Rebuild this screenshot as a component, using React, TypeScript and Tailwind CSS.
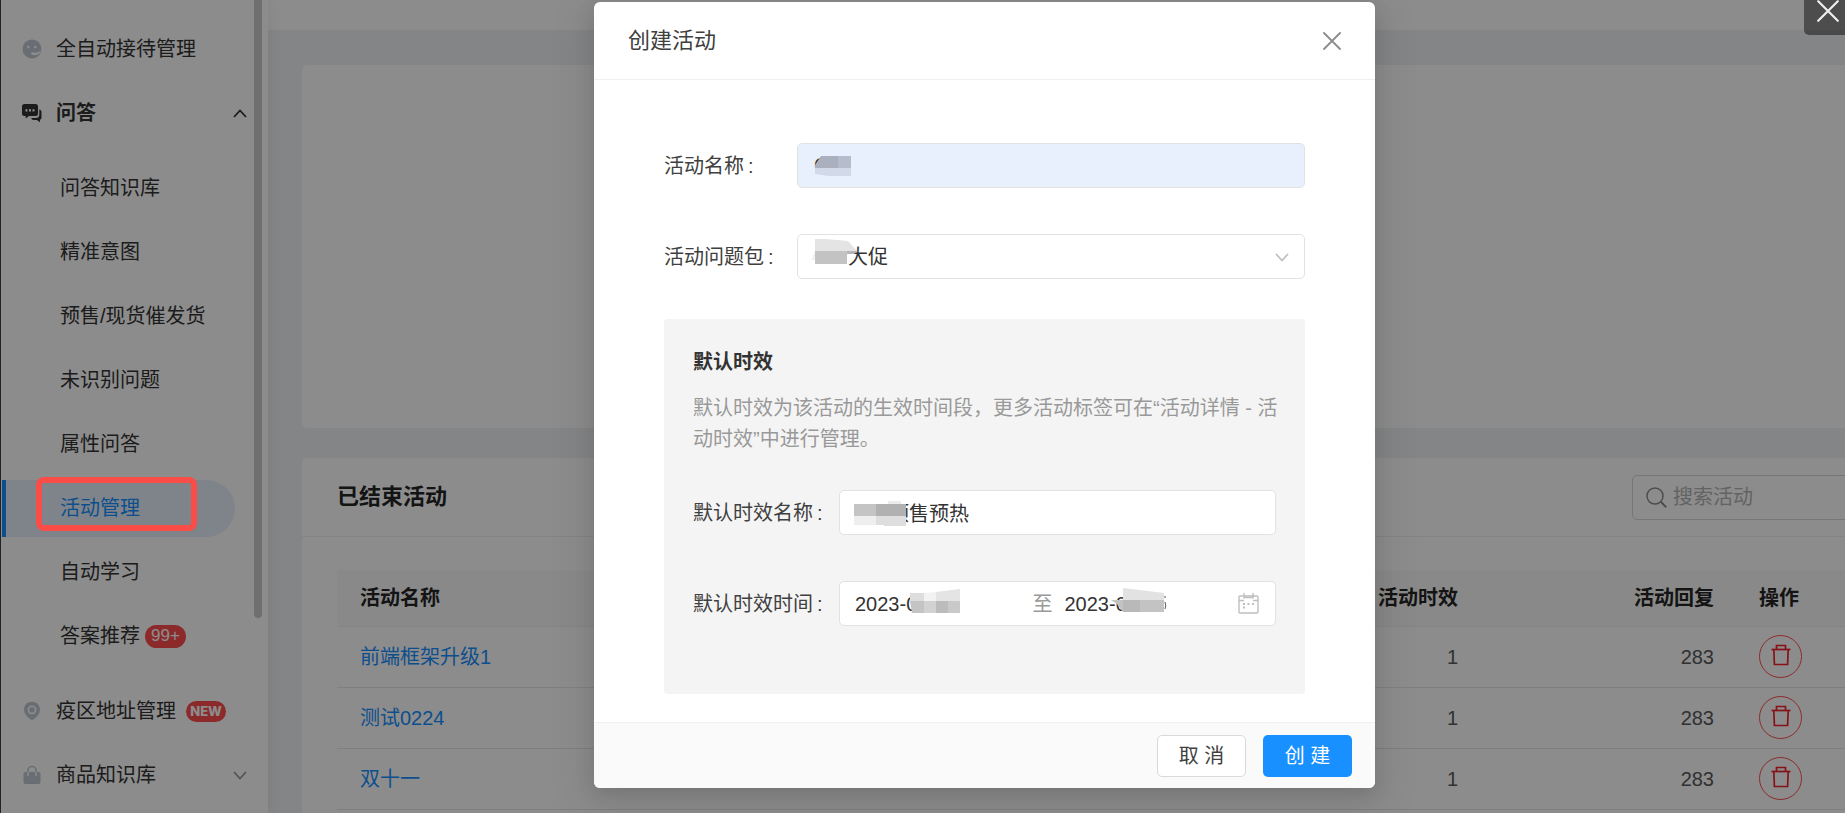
import React, { useState } from "react";

type NavItem = { label: string; active?: boolean; badge?: string };

const QA_ITEMS: NavItem[] = [
  { label: "问答知识库" },
  { label: "精准意图" },
  { label: "预售/现货催发货" },
  { label: "未识别问题" },
  { label: "属性问答" },
  { label: "活动管理", active: true },
  { label: "自动学习" },
  { label: "答案推荐", badge: "99+" },
];

const ACTIVITIES = [
  { name: "前端框架升级1", periods: 1, replies: 283 },
  { name: "测试0224", periods: 1, replies: 283 },
  { name: "双十一", periods: 1, replies: 283 },
];

/* ---------- icons ---------- */

function FaceIcon() {
  return (
    <svg width="20" height="20" viewBox="0 0 20 20" fill="none">
      <circle cx="10" cy="10" r="9.5" fill="#c0c9d5" />
      <circle cx="6.2" cy="8" r="1.3" fill="#fff" />
      <circle cx="13.2" cy="8" r="1.3" fill="#fff" />
      <path d="M9 14.500c0-1 .8-1.500 1.800-1.300 2.800.6 5.400.2 8.400-1.500-.8 2.600-3 4.200-5.600 4.400-2.200.2-4.600 0-4.600-1.600z" fill="#fff" />
    </svg>
  );
}

function ChatIcon() {
  return (
    <svg width="20" height="20" viewBox="0 0 20 20" fill="#333">
      <path d="M2.5 1h11A2.5 2.5 0 0 1 16 3.500v7a2.500 2.500 0 0 1-2.500 2.500H7l-3.300 2.500V13H2.500A2.500 2.500 0 0 1 0 10.500v-7A2.500 2.500 0 0 1 2.500 1z" />
      <path d="M17.300 6.500A2.500 2.500 0 0 1 19.500 9v5.500a2.500 2.500 0 0 1-1.500 2.300v2.400L14.800 17h-3.300a2.500 2.500 0 0 1-2.300-2h4.600a3.500 3.500 0 0 0 3.500-3.500z" />
      <rect x="3.500" y="6.200" width="2" height="2.300" fill="#fff" />
      <rect x="7" y="6.200" width="2" height="2.300" fill="#fff" />
      <rect x="10.500" y="6.200" width="2" height="2.300" fill="#fff" />
    </svg>
  );
}

function PinIcon() {
  return (
    <svg width="20" height="20" viewBox="0 0 20 20">
      <path d="M10 .8c4.600 0 8 3.400 8 7.800 0 3.800-2.400 7-6.200 9.700-1.200.9-2.400.9-3.600 0C4.400 15.600 2 12.400 2 8.600 2 4.200 5.400.8 10 .8z" fill="#c0c9d5" />
      <circle cx="10" cy="8.800" r="3.600" fill="none" stroke="#fff" strokeWidth="1.600" />
    </svg>
  );
}

function BagIcon() {
  return (
    <svg width="20" height="20" viewBox="0 0 20 20" fill="none">
      <rect x="1.500" y="7" width="17" height="12" rx="2" fill="#c0c9d5" />
      <path d="M6 7v4M14 7v4" stroke="#fff" strokeWidth="1.400" />
      <path d="M6 7V5.500a4 4 0 0 1 8 0V7" stroke="#c0c9d5" strokeWidth="1.600" />
    </svg>
  );
}

function Chevron({ up, className }: { up?: boolean; className?: string }) {
  return (
    <svg className={className} width="14" height="9" viewBox="0 0 14 9" fill="none" stroke="currentColor" strokeWidth="1.8">
      <path d={up ? "M1 8l6-6.500L13 8" : "M1 1l6 6.500L13 1"} />
    </svg>
  );
}

function CloseIcon({ size }: { size: number }) {
  return (
    <svg width={size} height={size} viewBox="0 0 18 18" stroke="currentColor" strokeWidth="1.800" strokeLinecap="round">
      <path d="M1 1l16 16M17 1L1 17" />
    </svg>
  );
}

function SearchIcon() {
  return (
    <svg width="21" height="21" viewBox="0 0 21 21" fill="none" stroke="#8c8c8c" strokeWidth="1.500">
      <circle cx="9" cy="9" r="8" />
      <path d="M14.800 14.800l5.400 5.400" strokeWidth="2" />
    </svg>
  );
}

function TrashIcon() {
  return (
    <svg width="20" height="22" viewBox="0 0 20 22" fill="none" stroke="currentColor" strokeWidth="1.700">
      <path d="M.5 5.500h19" />
      <path d="M5.500 5.500V1.500h9v4" />
      <path d="M2.800 5.500l.6 15h13.200l.6-15" />
    </svg>
  );
}

function CalendarIcon() {
  return (
    <svg className="ml-2 shrink-0" width="21" height="21" viewBox="0 0 21 21" fill="none" stroke="#bfbfbf" strokeWidth="1.400">
      <rect x="1" y="3" width="19" height="17" rx="1" />
      <path d="M1 7.500h5M15 7.500h5M6 4.500h9M6 0v5.500M15 0v5.500" />
      <path d="M5 14.500h2M5 11h2M9.500 11h2M14 11h2" strokeWidth="2" />
    </svg>
  );
}

/* ---------- censored values ---------- */

function NameMask() {
  return (
    <svg className="pointer-events-none absolute left-4 top-2" width="48" height="28" viewBox="0 0 48 28">
      <path d="M8 5h17v12H2v-3z" fill="#aab0bd" />
      <rect x="25" y="5" width="13" height="12" fill="#b5bccb" />
      <path d="M2 17h36v8H16l-14-2z" fill="#d2d9e8" />
    </svg>
  );
}

function PackageMask() {
  return (
    <svg className="pointer-events-none absolute left-3 top-1" width="52" height="28" viewBox="0 0 52 28">
      <path d="M6 1h11l22 2 9 10H6z" fill="#e4e4e4" />
      <path d="M6 13h32v13H6z" fill="#c3c3c3" />
      <path d="M38 13h11l-4 3h-7z" fill="#b5b5b5" />
      <path d="M6 13v9H2z" fill="#f2f2f2" />
    </svg>
  );
}

function PeriodMask() {
  return (
    <svg className="pointer-events-none absolute left-3 top-2" width="56" height="32" viewBox="0 0 56 32">
      <path d="M3 6h22v12H3z" fill="#c4c4c4" />
      <path d="M37 3h13v3H37z" fill="#ececec" />
      <path d="M25 6h30v12H25z" fill="#b1b1b1" />
      <path d="M3 18h22v9H3z" fill="#eeeeee" />
      <path d="M25 18h30v10H33v-1h-8z" fill="#dedede" />
    </svg>
  );
}

function StartMask() {
  return (
    <svg className="pointer-events-none absolute left-[54px] -top-1" width="54" height="26" viewBox="0 0 54 26">
      <path d="M1 5h14v8H1z" fill="#dddddd" />
      <path d="M15 5l12-1v9H15z" fill="#f2f2f2" />
      <path d="M27 4l24-3v12H27z" fill="#e4e4e4" />
      <path d="M1 13h14v12H3z" fill="#c4c4c4" />
      <path d="M15 13h12v12H15z" fill="#d2d2d2" />
      <path d="M27 13h12v12H27z" fill="#bcbcbc" />
      <path d="M39 13h12v12H39z" fill="#c9c9c9" />
    </svg>
  );
}

function EndMask() {
  return (
    <svg className="pointer-events-none absolute left-[46px] -top-1" width="58" height="26" viewBox="0 0 58 26">
      <path d="M12 0l41 5v7H12z" fill="#e2e2e2" />
      <path d="M0 12h53v12H12l-6-8z" fill="#c3c3c3" />
      <path d="M12 12h17v12H12z" fill="#b9b9b9" />
      <path d="M54 8v2M54 14q1.500 4 0 7" stroke="#555" strokeWidth="1" fill="none" />
    </svg>
  );
}

/* ---------- page ---------- */

function NavRow({ icon, label, children }: { icon: React.ReactNode; label: string; children?: React.ReactNode }) {
  return (
    <a href="#" className="flex h-16 items-center pl-[21px] pr-[21px]">
      {icon}
      <span className="ml-[14px]">{label}</span>
      {children}
    </a>
  );
}

function Sidebar() {
  return (
    <nav className="relative z-10 w-[268px] shrink-0 border-l border-[#404040] bg-white pt-[17px] text-[#333] shadow-[2px_0_12px_rgba(0,0,0,0.06)]">
      <NavRow icon={<FaceIcon />} label="全自动接待管理" />
      <button className="flex h-16 w-full items-center pl-[21px] pr-[21px] font-bold">
        <ChatIcon />
        <span className="ml-[14px]">问答</span>
        <Chevron up className="ml-auto" />
      </button>
      <ul className="my-[11px]">
        {QA_ITEMS.map((item) => (
          <li key={item.label} className="flex h-16 items-center pl-px">
            <a
              href="#"
              className={
                item.active
                  ? "flex h-[57px] w-[233px] items-center rounded-r-full border-l-4 border-[#1890ff] bg-[#e6f0fb] pl-[54px] text-[#1890ff]"
                  : "flex h-[57px] w-[233px] items-center pl-[58px]"
              }
            >
              {item.label}
              {item.badge && (
                <span className="ml-[5px] flex h-[23px] items-center rounded-full bg-[#ff4d4f] px-[6px] text-[17px] text-white">
                  {item.badge}
                </span>
              )}
            </a>
          </li>
        ))}
      </ul>
      <NavRow icon={<PinIcon />} label="疫区地址管理">
        <span className="ml-[10px] flex h-[21px] w-10 items-center justify-center rounded-full bg-[#ff4d4f] font-[Inter,sans-serif] text-[13px] font-extrabold text-white">
          NEW
        </span>
      </NavRow>
      <NavRow icon={<BagIcon />} label="商品知识库">
        <Chevron className="ml-auto text-[#999]" />
      </NavRow>
      <div className="absolute right-[6px] top-0 h-[618px] w-2 rounded-b-full bg-[#cacaca]" />
    </nav>
  );
}

function ActivityTable() {
  return (
    <table className="w-full border-collapse">
      <thead>
        <tr className="h-14 border-b border-[#f0f0f0] bg-[#fafafa] text-[#262626]">
          <th className="pl-[23px] text-left">活动名称</th>
          <th className="w-[560px] pr-[22px] text-right">活动时效</th>
          <th className="w-[256px] pr-[22px] text-right">活动回复</th>
          <th className="w-[164px] pl-[23px] text-left">操作</th>
        </tr>
      </thead>
      <tbody>
        {ACTIVITIES.map((row) => (
          <tr key={row.name} className="h-[61px] border-b border-[#e8e8e8] text-[#595959]">
            <td className="pl-[23px]">
              <a href="#" className="text-[#1890ff]">{row.name}</a>
            </td>
            <td className="pr-[22px] text-right">{row.periods}</td>
            <td className="pr-[22px] text-right">{row.replies}</td>
            <td className="pl-[23px]">
              <button aria-label="删除" className="flex size-[43px] items-center justify-center rounded-full border border-[#ff4d4f] pb-1 text-[#f5222d]">
                <TrashIcon />
              </button>
            </td>
          </tr>
        ))}
      </tbody>
    </table>
  );
}

function CreateDialog() {
  const [name, setName] = useState("C");
  const [period, setPeriod] = useState("预售预热");
  const field = "h-[45px] w-full rounded-[5px] border border-[#e2e2e2] text-[#333] outline-none";

  return (
    <div role="dialog" aria-label="创建活动" className="mt-[2px] w-[781px] overflow-hidden rounded-md bg-white text-[#404040] shadow-[0_6px_20px_rgba(0,0,0,0.12),0_12px_40px_12px_rgba(0,0,0,0.06)]">
      <div className="flex h-[78px] items-center justify-between border-b border-[#f0f0f0] pl-[34px] pr-[34px]">
        <h2 className="text-[22px]">创建活动</h2>
        <button aria-label="关闭" className="text-[#8c8c8c]">
          <CloseIcon size={18} />
        </button>
      </div>

      <form className="px-[70px] pb-7 pt-[63px]">
        <div className="mb-[46px] flex items-center">
          <label htmlFor="name" className="w-[133px] shrink-0">
            活动名称<span className="ml-1">:</span>
          </label>
          <div className="relative flex-1">
            <input id="name" value={name} onChange={(e) => setName(e.target.value)} className={`${field} bg-[#e8f0fe] px-4`} />
            <NameMask />
          </div>
        </div>
        <div className="mb-10 flex items-center">
          <label htmlFor="package" className="w-[133px] shrink-0">
            活动问题包<span className="ml-1">:</span>
          </label>
          <div className="relative flex-1">
            <select id="package" className={`${field} appearance-none bg-white pl-[50px]`}>
              <option>大促</option>
            </select>
            <PackageMask />
            <Chevron className="pointer-events-none absolute right-4 top-[19px] text-[#bfbfbf]" />
          </div>
        </div>

        <section className="rounded-sm bg-[#f4f4f4] px-[29px] pb-[68px] pt-7">
          <h3 className="font-bold leading-[31px] text-[#333]">默认时效</h3>
          <p className="-mr-2 mb-[35px] mt-[15px] leading-[31px] text-[#999]">
            默认时效为该活动的生效时间段，更多活动标签可在“活动详情 - 活动时效”中进行管理。
          </p>
          <div className="mb-[46px] flex items-center">
            <label htmlFor="period" className="w-[146px] shrink-0">
              默认时效名称<span className="ml-1">:</span>
            </label>
            <div className="relative flex-1">
              <input id="period" value={period} onChange={(e) => setPeriod(e.target.value)} className={`${field} bg-white pl-[49px]`} />
              <PeriodMask />
            </div>
          </div>
          <div className="flex items-center">
            <label htmlFor="start" className="w-[146px] shrink-0">
              默认时效时间<span className="ml-1">:</span>
            </label>
            <div className="flex h-[45px] min-w-0 flex-1 items-center rounded-[5px] border border-[#e2e2e2] bg-white pl-[15px] pr-4 text-[#333]">
              <div className="relative min-w-0 flex-1">
                <input id="start" defaultValue="2023-0" className="block h-6 w-full outline-none" />
                <StartMask />
              </div>
              <span className="mx-3 text-[#999]">至</span>
              <div className="relative min-w-0 flex-1">
                <input aria-label="结束时间" defaultValue="2023-0" className="block h-6 w-full outline-none" />
                <EndMask />
              </div>
              <CalendarIcon />
            </div>
          </div>
        </section>
      </form>

      <div className="flex justify-end gap-[17px] border-t border-[#f0f0f0] bg-[#fafafa] pb-[11px] pr-[23px] pt-3">
        <button className="h-[42px] w-[89px] rounded-[5px] border border-[#d9d9d9] bg-white">取 消</button>
        <button className="h-[42px] w-[89px] rounded-[5px] bg-[#1890ff] text-white">创 建</button>
      </div>
    </div>
  );
}

export default function App() {
  return (
    <div className="relative h-screen overflow-hidden font-['Liberation_Sans','Noto_Sans_CJK_SC',sans-serif] text-[20px] leading-[30px]">
      {/* the page is wider than the window, the right edge is cut off */}
      <div className="relative flex h-full w-[calc(100%+124px)]">
        <Sidebar />
        <main className="flex min-w-0 flex-1 flex-col bg-[#f0f2f5]">
          <header className="h-[30px] shrink-0 bg-white" />
          <div className="flex flex-1 flex-col gap-[30px] px-[34px] pt-[35px]">
            <section className="h-[363px] shrink-0 rounded-[5px] bg-white" />
            <section className="flex-1 rounded-t-[5px] bg-white">
              <div className="flex h-[79px] items-center justify-between border-b border-[#f0f0f0] px-[35px]">
                <h2 className="text-[22px] font-bold text-[#262626]">已结束活动</h2>
                <label className="flex h-[45px] w-[268px] items-center rounded-[5px] border border-[#d9d9d9] px-[13px]">
                  <SearchIcon />
                  <input aria-label="搜索活动" placeholder="搜索活动" className="ml-[6px] min-w-0 flex-1 outline-none placeholder:text-[#b5b5b5]" />
                </label>
              </div>
              <div className="px-[35px] pt-[33px]">
                <ActivityTable />
              </div>
            </section>
          </div>
        </main>

        <div className="absolute inset-0 z-20 flex items-start justify-center bg-black/45">
          <CreateDialog />
        </div>
      </div>

      <div className="pointer-events-none absolute left-9 top-[477px] z-30 h-[54px] w-[161px] rounded-lg border-[6px] border-[#fa4d48]" />
      <button aria-label="关闭预览" className="absolute right-0 top-0 z-30 flex h-[35px] w-[41px] justify-center rounded-bl-[5px] bg-black/45 pl-[6px] text-[#eee]">
        <CloseIcon size={22} />
      </button>
    </div>
  );
}
